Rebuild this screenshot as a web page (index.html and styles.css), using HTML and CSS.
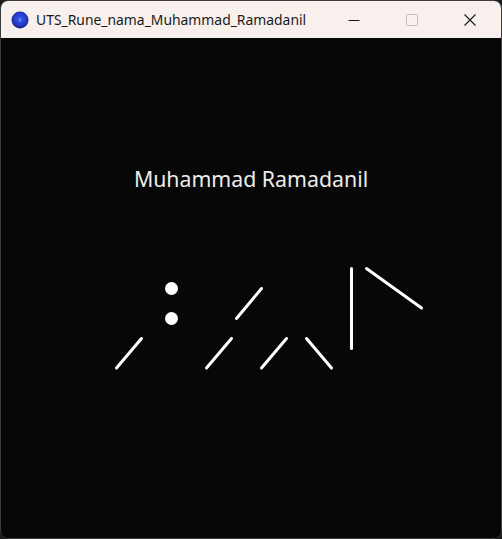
FILE: index.html
```html
<!DOCTYPE html>
<html>
<head>
<meta charset="utf-8">
<link rel="stylesheet" href="styles.css">
</head>
<body>
<div class="window">
  <div class="titlebar">
    <div class="app">
      <svg class="app-icon" width="18" height="18" viewBox="0 0 18 18">
        <defs>
          <radialGradient id="g" cx="50%" cy="45%" r="55%">
            <stop offset="0" stop-color="#3c5ef0"/>
            <stop offset="0.7" stop-color="#2338c4"/>
            <stop offset="1" stop-color="#14207a"/>
          </radialGradient>
        </defs>
        <circle cx="9" cy="9" r="8.5" fill="url(#g)"/>
        <path d="M8 6.8 L10.6 9 L8 11.2 Z" fill="#6f8cff"/>
      </svg>
      <span class="title">UTS_Rune_nama_Muhammad_Ramadanil</span>
    </div>
    <div class="controls">
      <div class="ctl">
        <svg width="12" height="12" viewBox="0 0 12 12"><path d="M0.5 6.5 H11.5" stroke="#1a1a1a" stroke-width="1"/></svg>
      </div>
      <div class="ctl">
        <svg width="12" height="12" viewBox="0 0 12 12"><rect x="0.5" y="0.5" width="11" height="11" rx="1.5" fill="none" stroke="#c4c0be" stroke-width="1"/></svg>
      </div>
      <div class="ctl">
        <svg width="12" height="12" viewBox="0 0 12 12"><path d="M0.5 0.5 L11.5 11.5 M11.5 0.5 L0.5 11.5" stroke="#1a1a1a" stroke-width="1.1"/></svg>
      </div>
    </div>
  </div>
  <div class="canvas">
    <div class="name">Muhammad Ramadanil</div>
    <svg class="runes" width="500" height="280" viewBox="1 240 500 280">
      <g stroke="#ffffff" stroke-width="3" stroke-linecap="round" fill="none">
        <line x1="116.5" y1="368" x2="141.5" y2="338.5"/>
        <line x1="236.5" y1="318.5" x2="261.5" y2="288.5"/>
        <line x1="206.5" y1="368" x2="231.5" y2="338.5"/>
        <line x1="261.5" y1="368" x2="286.5" y2="338.5"/>
        <line x1="306.5" y1="338.5" x2="331.5" y2="368"/>
        <line x1="351.5" y1="268.5" x2="351.5" y2="348.5"/>
        <line x1="366.5" y1="268.5" x2="421.5" y2="308"/>
      </g>
      <g fill="#ffffff">
        <circle cx="171.5" cy="288.5" r="6.5"/>
        <circle cx="171.5" cy="318.5" r="6.5"/>
      </g>
    </svg>
  </div>
</div>
</body>
</html>
```
FILE: styles.css
```css
html, body {
  margin: 0;
  padding: 0;
  background: #1c1c1c;
}
body {
  width: 502px;
  height: 539px;
  overflow: hidden;
}
.window {
  box-sizing: border-box;
  width: 502px;
  height: 539px;
  border: 1px solid #3c3c3c;
  border-radius: 8px;
  overflow: hidden;
  display: flex;
  flex-direction: column;
  background: #070707;
}
.titlebar {
  height: 37px;
  flex: 0 0 37px;
  background: #f8f0ec;
  display: flex;
  align-items: center;
  justify-content: space-between;
}
.app {
  display: flex;
  align-items: center;
  padding-left: 10px;
  gap: 7px;
}
.app-icon {
  display: block;
}
.title {
  font-family: "Noto Sans", "Open Sans", sans-serif;
  font-size: 13.9px;
  color: #1a1a1a;
}
.controls {
  display: flex;
  height: 100%;
  padding-right: 2px;
}
.ctl {
  width: 58px;
  height: 100%;
  display: flex;
  align-items: center;
  justify-content: center;
}
.ctl svg {
  display: block;
}
.canvas {
  flex: 1;
  background: #070707;
  display: flex;
  flex-direction: column;
  align-items: center;
}
.name {
  margin-top: 127px;
  font-family: "Noto Sans", "Open Sans", sans-serif;
  font-size: 21.3px;
  line-height: 28px;
  color: #ececec;
  height: 46px;
}
.runes {
  display: block;
  margin-top: 29px;
}
```
